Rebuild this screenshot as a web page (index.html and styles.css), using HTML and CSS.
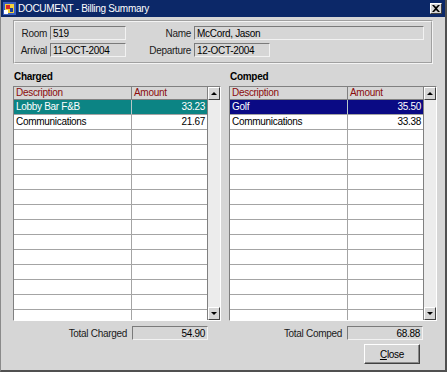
FILE: index.html
```html
<!DOCTYPE html>
<html lang="en">

<head>
    <meta charset="UTF-8">
    <meta name="viewport" content="width=device-width, initial-scale=1.0">
    <title>Billing Summary</title>
    <link rel="stylesheet" href="styles.css">
</head>

<body>
    <div class="window">
        <div class="titlebar">
            <svg class="app-icon" width="13" height="13" viewBox="0 0 13 13">
                <rect x="0" y="0" width="13" height="13" fill="#3a5fbf" />
                <rect x="2" y="2" width="9" height="9" fill="#f4d23c" />
                <rect x="3" y="3" width="4" height="4" fill="#d8262b" />
                <rect x="7" y="6" width="3" height="4" fill="#1c3f9c" />
                <rect x="1" y="8" width="4" height="4" fill="#ffffff" />
            </svg>
            <span class="title">DOCUMENT - Billing Summary</span>
            <div class="title-close">
                <svg width="8" height="7" viewBox="0 0 8 7">
                    <path d="M0 0h2l2 2 2-2h2l-3 3.5 3 3.5h-2l-2-2-2 2h-2l3-3.5z" fill="#000" />
                </svg>
            </div>
        </div>

        <div class="content">
            <div class="group">
                <span class="label">Room</span>
                <div class="field short">519</div>
                <span class="label">Name</span>
                <div class="field">McCord, Jason</div>
                <span class="label">Arrival</span>
                <div class="field short">11-OCT-2004</div>
                <span class="label">Departure</span>
                <div class="field short">12-OCT-2004</div>
            </div>

            <div class="panels">
                <section class="panel">
                    <div class="panel-title">Charged</div>
                    <div class="list">
                        <div class="rows">
                            <div class="row head"><span>Description</span><span>Amount</span></div>
                            <div class="row selected teal"><span>Lobby Bar F&amp;B</span><span class="num">33.23</span></div>
                            <div class="row"><span>Communications</span><span class="num">21.67</span></div>
                            <div class="row"><span></span><span></span></div>
                            <div class="row"><span></span><span></span></div>
                            <div class="row"><span></span><span></span></div>
                            <div class="row"><span></span><span></span></div>
                            <div class="row"><span></span><span></span></div>
                            <div class="row"><span></span><span></span></div>
                            <div class="row"><span></span><span></span></div>
                            <div class="row"><span></span><span></span></div>
                            <div class="row"><span></span><span></span></div>
                            <div class="row"><span></span><span></span></div>
                            <div class="row"><span></span><span></span></div>
                            <div class="row"><span></span><span></span></div>
                            <div class="row"><span></span><span></span></div>
                        </div>
                        <div class="scrollbar">
                            <div class="sb-btn"><span class="arrow up"></span></div>
                            <div class="sb-track"></div>
                            <div class="sb-btn"><span class="arrow down"></span></div>
                        </div>
                    </div>
                    <div class="total">
                        <span class="label">Total Charged</span>
                        <div class="field num">54.90</div>
                    </div>
                </section>

                <section class="panel">
                    <div class="panel-title">Comped</div>
                    <div class="list">
                        <div class="rows">
                            <div class="row head"><span>Description</span><span>Amount</span></div>
                            <div class="row selected navy"><span>Golf</span><span class="num">35.50</span></div>
                            <div class="row"><span>Communications</span><span class="num">33.38</span></div>
                            <div class="row"><span></span><span></span></div>
                            <div class="row"><span></span><span></span></div>
                            <div class="row"><span></span><span></span></div>
                            <div class="row"><span></span><span></span></div>
                            <div class="row"><span></span><span></span></div>
                            <div class="row"><span></span><span></span></div>
                            <div class="row"><span></span><span></span></div>
                            <div class="row"><span></span><span></span></div>
                            <div class="row"><span></span><span></span></div>
                            <div class="row"><span></span><span></span></div>
                            <div class="row"><span></span><span></span></div>
                            <div class="row"><span></span><span></span></div>
                            <div class="row"><span></span><span></span></div>
                        </div>
                        <div class="scrollbar">
                            <div class="sb-btn"><span class="arrow up"></span></div>
                            <div class="sb-track"></div>
                            <div class="sb-btn"><span class="arrow down"></span></div>
                        </div>
                    </div>
                    <div class="total">
                        <span class="label">Total Comped</span>
                        <div class="field num">68.88</div>
                    </div>
                </section>
            </div>

            <div class="footer">
                <button class="btn"><u>C</u>lose</button>
            </div>
        </div>
    </div>
</body>

</html>
```

FILE: styles.css
```css
body {
    margin: 0;
    background-color: #d6d6d6;
    font-family: 'Liberation Sans', Arial, sans-serif;
    font-size: 10px;
    letter-spacing: -0.3px;
    color: #000;
}

.window {
    width: 447px;
    height: 372px;
    box-sizing: border-box;
    display: flex;
    flex-direction: column;
    background-color: #d6d6d6;
    border-left: 1px solid #8a8a8a;
    border-right: 2px solid #505050;
    border-bottom: 2px solid #505050;
}

.titlebar {
    height: 17px;
    flex-shrink: 0;
    display: flex;
    align-items: center;
    padding: 0 3px 0 2px;
    background-color: #0c2868;
    color: #fff;
    font-size: 10px;
}

.app-icon {
    margin-right: 2px;
}

.title {
    flex: 1;
    line-height: 17px;
}

.title-close {
    width: 12px;
    height: 11px;
    box-sizing: border-box;
    display: flex;
    align-items: center;
    justify-content: center;
    background-color: #d6d6d6;
    border: 1px solid;
    border-color: #fff #404040 #404040 #fff;
}

.content {
    flex: 1;
    display: flex;
    flex-direction: column;
    padding: 3px 12px 0 12px;
}

/* header block */
.group {
    display: grid;
    grid-template-columns: 35px 76px 1fr 230px;
    grid-auto-rows: 14px;
    row-gap: 3px;
    align-items: center;
    padding: 4px 7px 5px 0;
    border: 2px groove #f4f4f4;
}

.label {
    text-align: right;
    padding-right: 3px;
    color: #1a1a1a;
}

.field {
    height: 14px;
    box-sizing: border-box;
    line-height: 13px;
    padding: 0 2px;
    background-color: #d6d6d6;
    border: 1px solid;
    border-color: #7a7a7a #f2f2f2 #f2f2f2 #7a7a7a;
    white-space: nowrap;
    overflow: hidden;
}

.field.short {
    width: 76px;
}

.field.num {
    width: 76px;
    text-align: right;
}

/* lists */
.panels {
    display: grid;
    grid-template-columns: 208px 207px;
    column-gap: 8px;
    margin-top: 6px;
}

.panel-title {
    font-weight: bold;
    height: 13px;
    line-height: 13px;
    margin: 0 0 3px 1px;
}

.list {
    display: flex;
    height: 235px;
    width: 208px;
    box-sizing: border-box;
    border: 1px solid;
    border-color: #808080 #ffffff #ffffff #808080;
}

.rows {
    flex: 1;
    overflow: hidden;
    background-color: #fff;
    border-right: 1px solid #808080;
}

.row {
    display: grid;
    grid-template-columns: 117px 1fr;
    height: 15px;
    box-sizing: border-box;
    line-height: 14px;
    border-bottom: 1px solid #a4a4a4;
}

.row span {
    padding: 0 2px;
    white-space: nowrap;
    overflow: hidden;
}

.row span + span {
    border-left: 1px solid #a4a4a4;
}

.row .num {
    text-align: right;
}

.row.head {
    height: 13px;
    line-height: 12px;
    background-color: #d6d6d6;
    color: #8b0c0c;
    border-bottom-color: #808080;
}

.row.head span + span {
    border-left-color: #808080;
}

.row.selected {
    color: #fff;
}

.row.teal {
    background-color: #0c8484;
}

.row.navy {
    background-color: #0a0a84;
}

.row.selected span + span {
    border-left-color: #b8c8c8;
}

.scrollbar {
    width: 12px;
    display: flex;
    flex-direction: column;
    background-color: #ececec;
}

.sb-btn {
    height: 13px;
    box-sizing: border-box;
    display: flex;
    align-items: center;
    justify-content: center;
    background-color: #d6d6d6;
    border: 1px solid;
    border-color: #fff #404040 #404040 #fff;
}

.sb-track {
    flex: 1;
}

.arrow {
    width: 0;
    height: 0;
    border-left: 3px solid transparent;
    border-right: 3px solid transparent;
}

.arrow.up {
    border-bottom: 3px solid #000;
}

.arrow.down {
    border-top: 3px solid #000;
}

.total {
    display: flex;
    justify-content: flex-end;
    align-items: center;
    gap: 2px;
    margin-top: 5px;
    padding-right: 13px;
}

.total .label {
    color: #1a1a1a;
}

/* buttons */
.footer {
    display: flex;
    justify-content: flex-end;
    padding: 4px 13px 0 0;
}

.btn {
    width: 56px;
    height: 20px;
    font-family: inherit;
    font-size: 10px;
    letter-spacing: -0.3px;
    color: #000;
    background-color: #d6d6d6;
    border: 1px solid;
    border-color: #fff #404040 #404040 #fff;
    box-shadow: inset -1px -1px 0 #888;
    padding: 0;
}
```
